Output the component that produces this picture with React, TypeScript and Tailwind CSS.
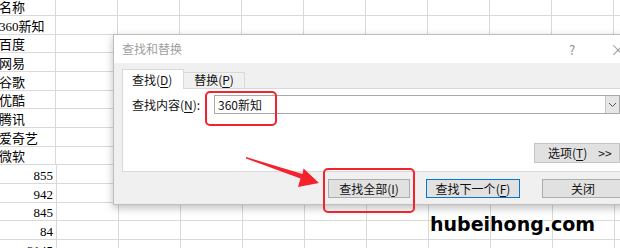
import React from 'react';

const rows: { text: string; right?: boolean }[] = [
  { text: '名称' },
  { text: '360新知' },
  { text: '百度' },
  { text: '网易' },
  { text: '谷歌' },
  { text: '优酷' },
  { text: '腾讯' },
  { text: '爱奇艺' },
  { text: '微软' },
  { text: '855', right: true },
  { text: '942', right: true },
  { text: '845', right: true },
  { text: '84', right: true },
  { text: '3145', right: true },
];

const sheetFont = { fontFamily: '"Liberation Serif", "Noto Sans CJK SC", serif' };
const uiFont = { fontFamily: '"Noto Sans CJK SC", "Liberation Sans", sans-serif' };

// letter with underline, like (D)
const Key = ({ k }: { k: string }) => (
  <span>
    (<span className="underline underline-offset-2">{k}</span>)
  </span>
);

const Sheet = () => (
  <div className="flex flex-col -mt-[2.67px]" style={sheetFont}>
    {rows.map((r, i) => (
      <div key={i} className="flex h-[18.67px] shrink-0 border-b border-[#d9d9d9]">
        <div
          className={`w-[57px] shrink-0 border-r border-[#d9d9d9] flex items-end pb-[1px] text-[13px] leading-none text-black overflow-hidden ${
            r.right ? 'justify-end pr-[3px]' : '-ml-[1px]'
          }`}
        >
          <span className="whitespace-nowrap">{r.text}</span>
        </div>
        {Array.from({ length: 9 }, (_, c) => (
          <div key={c} className="w-[62px] shrink-0 border-r border-[#d9d9d9]" />
        ))}
      </div>
    ))}
  </div>
);

const Dialog = () => (
  <div
    className="absolute left-[113px] top-[34px] w-[520px] h-[171px] border border-[#bdbdbd] bg-white flex flex-col shadow-[0_3px_8px_rgba(0,0,0,0.25)]"
    style={uiFont}
  >
    {/* title bar */}
    <div className="h-[28px] flex items-center pl-[8px] pr-[6px] text-[12px] leading-none">
      <span className="flex-1 text-[#a0a0a0]">查找和替换</span>
      <span className="w-[16px] text-center text-[#8a8a8a] text-[13px]">?</span>
      <span className="w-[30px]" />
      <span className="w-[16px] text-center text-[#8a8a8a] text-[16px] font-light">×</span>
    </div>

    {/* body */}
    <div className="flex-1 bg-[#f0f0f0] px-[8px] pt-[6px] flex flex-col text-[12px] text-[#111]">
      <div className="flex items-end h-[19px] relative z-10">
        <div className="w-[62px] h-[20px] -mb-px bg-white border border-b-0 border-[#d9d9d9] flex items-center pl-[9px] leading-none">
          查找<Key k="D" />
        </div>
        <div className="w-[61px] h-[16px] bg-[#f0f0f0] border-t border-r border-[#d9d9d9] flex items-center justify-center leading-none pb-[1px]">
          替换<Key k="P" />
        </div>
      </div>

      <div className="h-[84px] bg-white border border-[#d9d9d9] pl-[9px] pr-[3px] pt-[6px] flex flex-col">
        <div className="flex items-center h-[19px]">
          <span className="w-[82px] leading-none">
            查找内容<Key k="N" />:
          </span>
          <div className="flex-1 h-[19px] border border-[#a9a9a9] flex items-center">
            <span className="flex-1 pl-[3px] leading-none">360新知</span>
            <div className="w-[14px] h-full bg-[#e6e6e6] border-l border-[#c4c4c4] flex items-center justify-center">
              <svg width="9" height="6" viewBox="0 0 9 6">
                <path d="M1 1 L4.5 4.5 L8 1" fill="none" stroke="#555" strokeWidth="1" />
              </svg>
            </div>
          </div>
        </div>
        <div className="flex justify-end mt-[29px]">
          <div className="w-[86px] h-[20px] bg-[#e1e1e1] border border-[#c4c4c4] flex items-center pl-[13px] leading-none">
            选项<Key k="T" />
            <span className="ml-[11px]">&gt;&gt;</span>
          </div>
        </div>
      </div>

      {/* footer buttons */}
      <div className="flex mt-[7px] pl-[206px]">
        <div className="w-[84px] h-[19px] bg-[#e1e1e1] border border-[#adadad] flex items-center justify-center leading-none">
          查找全部<Key k="I" />
        </div>
        <div className="ml-[16px] w-[96px] h-[19px] bg-[#e1e1e1] border-[1.5px] border-[#0078d7] flex items-center justify-center leading-none">
          查找下一个<Key k="F" />
        </div>
        <div className="ml-[22px] w-[84px] h-[19px] bg-[#e1e1e1] border border-[#adadad] flex items-center justify-center leading-none">
          关闭
        </div>
      </div>
    </div>
  </div>
);

export default function App() {
  return (
    <div className="relative w-[620px] h-[248px] overflow-hidden bg-white">
      <Sheet />
      <Dialog />

      {/* red highlight boxes */}
      <div className="absolute left-[205px] top-[91px] w-[72px] h-[35px] border-2 border-[#f5222d] rounded-[5px]" />
      <div className="absolute left-[323px] top-[168px] w-[92px] h-[45px] border-2 border-[#f5222d] rounded-[5px]" />

      {/* red arrow */}
      <svg className="absolute left-0 top-0" width="620" height="248" viewBox="0 0 620 248">
        <polygon
          points="246,157 302.5,174 303.5,168.5 319,183 298,187 300.5,178.5 246,158.6"
          fill="#f5222d"
        />
      </svg>

      {/* watermark */}
      <div
        className="absolute left-[430px] top-[215px] text-[19px] leading-none font-bold text-black whitespace-nowrap"
        style={{ fontFamily: '"DejaVu Sans", sans-serif' }}
      >
        hubeihong.com
      </div>
    </div>
  );
}
